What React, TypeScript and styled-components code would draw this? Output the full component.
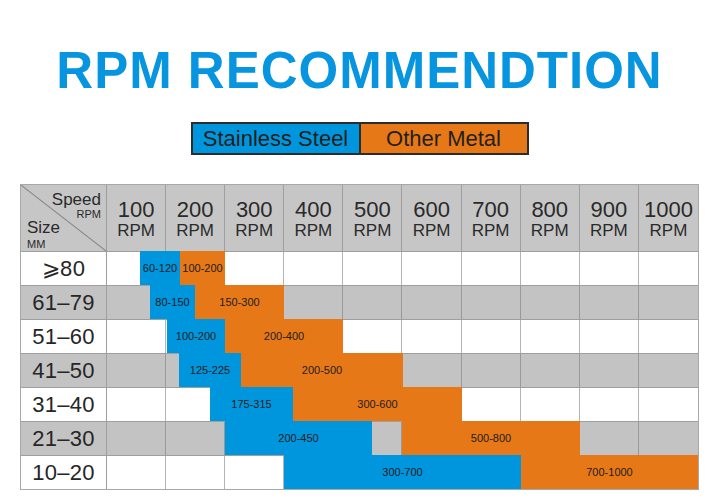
import React from "react";
import styled, { createGlobalStyle } from "styled-components";

const Global = createGlobalStyle`
  html, body { margin: 0; padding: 0; background: #ffffff; }
  body { font-family: "Liberation Sans", Arial, sans-serif; }
`;

const BLUE = "#0096de";
const ORANGE = "#e77817";
const GRAY = "#c3c3c3";
const LINE = "#9e9e9e";

const Page = styled.div`
  width: 719px;
  display: flex;
  flex-direction: column;
  align-items: center;
`;

const Title = styled.h1`
  margin: 41px 0 0 0;
  font-family: "Liberation Sans", Arial, sans-serif;
  font-weight: 700;
  font-size: 51px;
  line-height: 60px;
  letter-spacing: 1px;
  color: #0795df;
  white-space: nowrap;
`;

const Legend = styled.div`
  margin-top: 21px;
  display: flex;
  border: 2px solid #2c2c2c;
  height: 29px;
`;

const LegendCell = styled.div<{ $bg: string; $divider?: boolean }>`
  width: 166px;
  background: ${(p) => p.$bg};
  border-left: ${(p) => (p.$divider ? "2px solid #2c2c2c" : "none")};
  display: flex;
  align-items: center;
  justify-content: center;
  font-size: 22px;
  line-height: 29px;
  color: #231f1c;
`;

const Table = styled.div`
  margin-top: 29px;
  width: 679px;
  box-sizing: border-box;
  border: 1px solid #a8a8a8;
  display: flex;
  flex-direction: column;
`;

const Grid = styled.div`
  display: grid;
  grid-template-columns: 86px repeat(10, 1fr);
`;

const HeaderRow = styled(Grid)`
  height: 66px;
  background: #c6c6c6;
`;

const Corner = styled.div`
  position: relative;
  border-right: 1px solid ${LINE};
  display: flex;
  flex-direction: column;
  padding: 6px 5px 0 6px;
  color: #2a2a2a;
`;

const Diagonal = styled.svg`
  position: absolute;
  inset: 0;
  width: 100%;
  height: 100%;
`;

const CornerBig = styled.div<{ $right?: boolean }>`
  position: relative;
  font-size: 17px;
  line-height: 17px;
  text-align: ${(p) => (p.$right ? "right" : "left")};
  margin-top: ${(p) => (p.$right ? "0" : "-1px")};
`;

const CornerSmall = styled.div<{ $right?: boolean }>`
  position: relative;
  font-size: 11px;
  line-height: 12px;
  text-align: ${(p) => (p.$right ? "right" : "left")};
  margin-top: ${(p) => (p.$right ? "0" : "2px")};
`;

const HeadCell = styled.div<{ $last?: boolean }>`
  border-right: ${(p) => (p.$last ? "none" : `1px solid ${LINE}`)};
  display: flex;
  flex-direction: column;
  align-items: center;
  justify-content: center;
  padding-top: 4px;
  color: #2a2a2a;
`;

const HeadNum = styled.span`
  font-size: 22px;
  line-height: 22px;
`;

const HeadUnit = styled.span`
  font-size: 17px;
  line-height: 20px;
`;

const Row = styled(Grid)<{ $shade: boolean }>`
  height: 34px;
  box-sizing: border-box;
  border-top: 1px solid ${LINE};
  background: ${(p) => (p.$shade ? GRAY : "#ffffff")};
`;

const Label = styled.div`
  border-right: 1px solid ${LINE};
  display: flex;
  align-items: center;
  justify-content: center;
  font-size: 22px;
  color: #262626;
  letter-spacing: 0.3px;
`;

const Track = styled.div`
  grid-column: 2 / -1;
  position: relative;
  display: grid;
  grid-template-columns: repeat(10, 1fr);
`;

const TrackCell = styled.div<{ $shade: boolean; $last?: boolean }>`
  border-right: ${(p) => (p.$last ? "none" : `1px solid ${p.$shade ? "#999999" : "#b4b4b4"}`)};
`;

const Bar = styled.div<{ $bg: string }>`
  position: absolute;
  top: -1px;
  bottom: 0;
  background: ${(p) => p.$bg};
  display: flex;
  align-items: center;
  justify-content: center;
  font-size: 11px;
  color: #1c1c1c;
  white-space: nowrap;
`;

const TRACK_W = 591;

type Seg = { from: number; to: number; text: string; kind: "s" | "o" };
type RowData = { label: string; segs: Seg[] };

const rows: RowData[] = [
  {
    label: "⩾80",
    segs: [
      { from: 33, to: 73, text: "60-120", kind: "s" },
      { from: 73, to: 118, text: "100-200", kind: "o" },
    ],
  },
  {
    label: "61–79",
    segs: [
      { from: 43, to: 88, text: "80-150", kind: "s" },
      { from: 88, to: 177, text: "150-300", kind: "o" },
    ],
  },
  {
    label: "51–60",
    segs: [
      { from: 60, to: 118, text: "100-200", kind: "s" },
      { from: 118, to: 236, text: "200-400", kind: "o" },
    ],
  },
  {
    label: "41–50",
    segs: [
      { from: 72, to: 134, text: "125-225", kind: "s" },
      { from: 134, to: 296, text: "200-500", kind: "o" },
    ],
  },
  {
    label: "31–40",
    segs: [
      { from: 103, to: 186, text: "175-315", kind: "s" },
      { from: 186, to: 355, text: "300-600", kind: "o" },
    ],
  },
  {
    label: "21–30",
    segs: [
      { from: 118, to: 265, text: "200-450", kind: "s" },
      { from: 295, to: 473, text: "500-800", kind: "o" },
    ],
  },
  {
    label: "10–20",
    segs: [
      { from: 177, to: 414, text: "300-700", kind: "s" },
      { from: 414, to: 591, text: "700-1000", kind: "o" },
    ],
  },
];

const speeds = [100, 200, 300, 400, 500, 600, 700, 800, 900, 1000];

export default function App() {
  return (
    <>
      <Global />
      <Page>
        <Title>RPM RECOMMENDTION</Title>
        <Legend>
          <LegendCell $bg={BLUE}>Stainless Steel</LegendCell>
          <LegendCell $bg={ORANGE} $divider>
            Other Metal
          </LegendCell>
        </Legend>
        <Table>
          <HeaderRow>
            <Corner>
              <Diagonal viewBox="0 0 100 100" preserveAspectRatio="none">
                <line x1="0" y1="0" x2="100" y2="100" stroke="#8a8a8a" strokeWidth="1" vectorEffect="non-scaling-stroke" />
              </Diagonal>
              <CornerBig $right>Speed</CornerBig>
              <CornerSmall $right>RPM</CornerSmall>
              <CornerBig>Size</CornerBig>
              <CornerSmall>MM</CornerSmall>
            </Corner>
            {speeds.map((s, i) => (
              <HeadCell key={s} $last={i === speeds.length - 1}>
                <HeadNum>{s}</HeadNum>
                <HeadUnit>RPM</HeadUnit>
              </HeadCell>
            ))}
          </HeaderRow>
          {rows.map((r, ri) => {
            const shade = ri % 2 === 1;
            return (
              <Row key={r.label} $shade={shade}>
                <Label>{r.label}</Label>
                <Track>
                  {speeds.map((s, i) => (
                    <TrackCell key={s} $shade={shade} $last={i === speeds.length - 1} />
                  ))}
                  {r.segs.map((sg) => (
                    <Bar
                      key={sg.text + sg.kind}
                      $bg={sg.kind === "s" ? BLUE : ORANGE}
                      style={{
                        left: `${(sg.from / TRACK_W) * 100}%`,
                        width: `${((sg.to - sg.from) / TRACK_W) * 100}%`,
                      }}
                    >
                      {sg.text}
                    </Bar>
                  ))}
                </Track>
              </Row>
            );
          })}
        </Table>
      </Page>
    </>
  );
}
